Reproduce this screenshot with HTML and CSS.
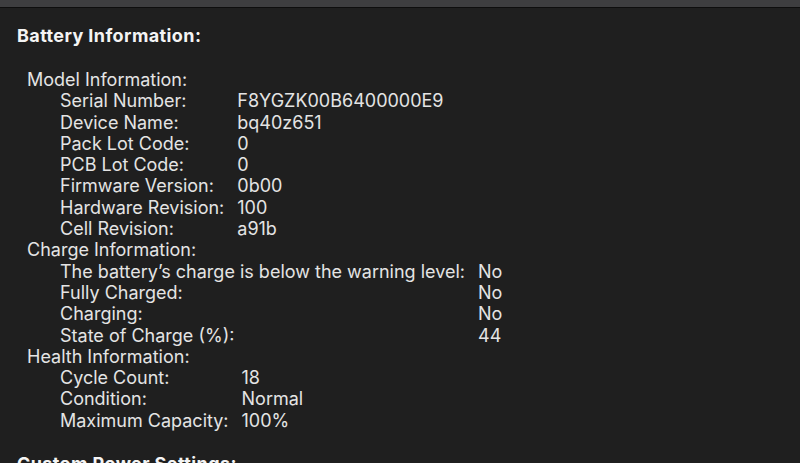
FILE: index.html
```html
<!DOCTYPE html>
<html lang="en">
<head>
  <meta charset="UTF-8" />
  <meta name="viewport" content="width=device-width, initial-scale=1.0"/>
  <title>Battery Information</title>
  <link rel="stylesheet" href="styles.css">
</head>
<body>
  <div class="toolbar"></div>

  <div class="report">
    <h2 class="section-title">Battery Information:</h2>

    <div class="block">
      <div class="group-title">Model Information:</div>
      <div class="pairs">
        <span>Serial Number:</span><span>F8YGZK00B6400000E9</span>
        <span>Device Name:</span><span>bq40z651</span>
        <span>Pack Lot Code:</span><span>0</span>
        <span>PCB Lot Code:</span><span>0</span>
        <span>Firmware Version:</span><span>0b00</span>
        <span>Hardware Revision:</span><span>100</span>
        <span>Cell Revision:</span><span>a91b</span>
      </div>

      <div class="group-title">Charge Information:</div>
      <div class="pairs">
        <span>The battery’s charge is below the warning level:</span><span>No</span>
        <span>Fully Charged:</span><span>No</span>
        <span>Charging:</span><span>No</span>
        <span>State of Charge (%):</span><span>44</span>
      </div>

      <div class="group-title">Health Information:</div>
      <div class="pairs">
        <span>Cycle Count:</span><span>18</span>
        <span>Condition:</span><span>Normal</span>
        <span>Maximum Capacity:</span><span>100%</span>
      </div>
    </div>

    <h2 class="section-title">Custom Power Settings:</h2>
  </div>
</body>
</html>
```

FILE: styles.css
```css
body {
  margin: 0;
  background: #1f1f1f;
  color: #e4e4e4;
  font-family: Inter, "Noto Sans", "Liberation Sans", sans-serif;
  font-size: 18px;
  line-height: 21.3px;
  height: 100vh;
  overflow: hidden;
}

.toolbar {
  height: 7px;
  background: #3e3e40;
  border-bottom: 1px solid #0e0e0e;
}

.report {
  padding: 17px 0 0 17px;
}

.section-title {
  margin: 0;
  font-size: 18px;
  line-height: 21.3px;
  font-weight: 700;
  letter-spacing: 0.4px;
  color: #f4f4f4;
}

.block {
  margin: 22.7px 0 21.7px 10px;
}

.pairs {
  display: grid;
  grid-template-columns: max-content max-content;
  column-gap: 13px;
  padding-left: 33px;
}
```
